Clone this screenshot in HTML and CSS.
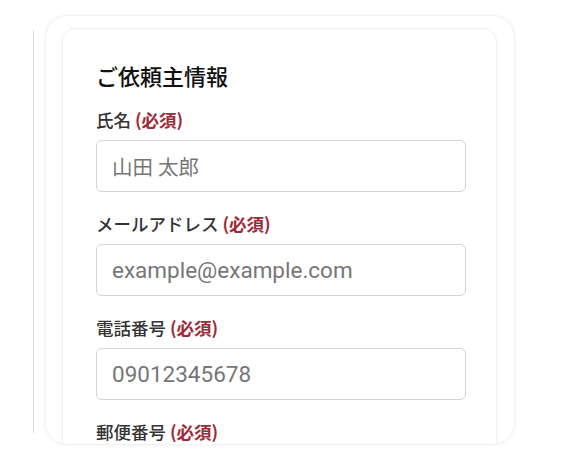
FILE: index.html
```html
<!DOCTYPE html>
<html lang="ja">
<head>
<meta charset="utf-8">
<link rel="stylesheet" href="styles.css">
</head>
<body>
<div class="stage">
  <div class="edge"></div>
  <div class="frame">
    <div class="card">
      <h2 class="title">ご依頼主情報</h2>
      <div class="field">
        <div class="label">氏名 <span class="req">(必須)</span></div>
        <div class="input input-jp">山田 太郎</div>
      </div>
      <div class="field">
        <div class="label">メールアドレス <span class="req">(必須)</span></div>
        <div class="input">example@example.com</div>
      </div>
      <div class="field">
        <div class="label">電話番号 <span class="req">(必須)</span></div>
        <div class="input">09012345678</div>
      </div>
      <div class="field">
        <div class="label">郵便番号 <span class="req">(必須)</span></div>
      </div>
    </div>
  </div>
</div>
</body>
</html>
```

FILE: styles.css
```css
html, body {
  margin: 0;
  padding: 0;
  background: #ffffff;
}
body {
  font-family: "Noto Sans CJK JP", "Noto Sans", Roboto, sans-serif;
  width: 562px;
  height: 462px;
  overflow: hidden;
}
.stage {
  display: flex;
  align-items: flex-start;
  padding-left: 33px;
  padding-top: 15px;
  gap: 11px;
}
.edge {
  width: 1px;
  height: 403px;
  margin-top: 15px;
  background: #dddddd;
}
.frame {
  width: 470px;
  height: 430px;
  box-sizing: border-box;
  border-radius: 22px;
  border: 1px solid #f1f1f1;
  box-shadow: 0 0 5px rgba(0, 0, 0, 0.05);
  background: #ffffff;
  padding: 12px 17px 0 16px;
  overflow: hidden;
}
.card {
  box-sizing: border-box;
  height: 460px;
  border: 1px solid #f0f0f0;
  border-radius: 14px;
  box-shadow: 0 0 4px rgba(0, 0, 0, 0.04);
  padding: 32px 30px 0 33px;
}
.title {
  margin: 0 0 21px 0;
  font-size: 22px;
  line-height: 28px;
  font-weight: 500;
  color: #111111;
}
.field {
  margin-bottom: 22px;
}
.label {
  font-size: 17.5px;
  line-height: 20px;
  font-weight: 500;
  color: #333333;
  margin-bottom: 10px;
}
.req {
  color: #9e2a3a;
  font-weight: 700;
}
.input {
  box-sizing: border-box;
  height: 52px;
  border: 1px solid #d3d3d3;
  border-radius: 6px;
  padding: 0 15px;
  display: flex;
  align-items: center;
  font-family: Roboto, "Noto Sans CJK JP", sans-serif;
  font-size: 22.5px;
  color: #767676;
}
.input-jp {
  font-size: 20.5px;
}
```
